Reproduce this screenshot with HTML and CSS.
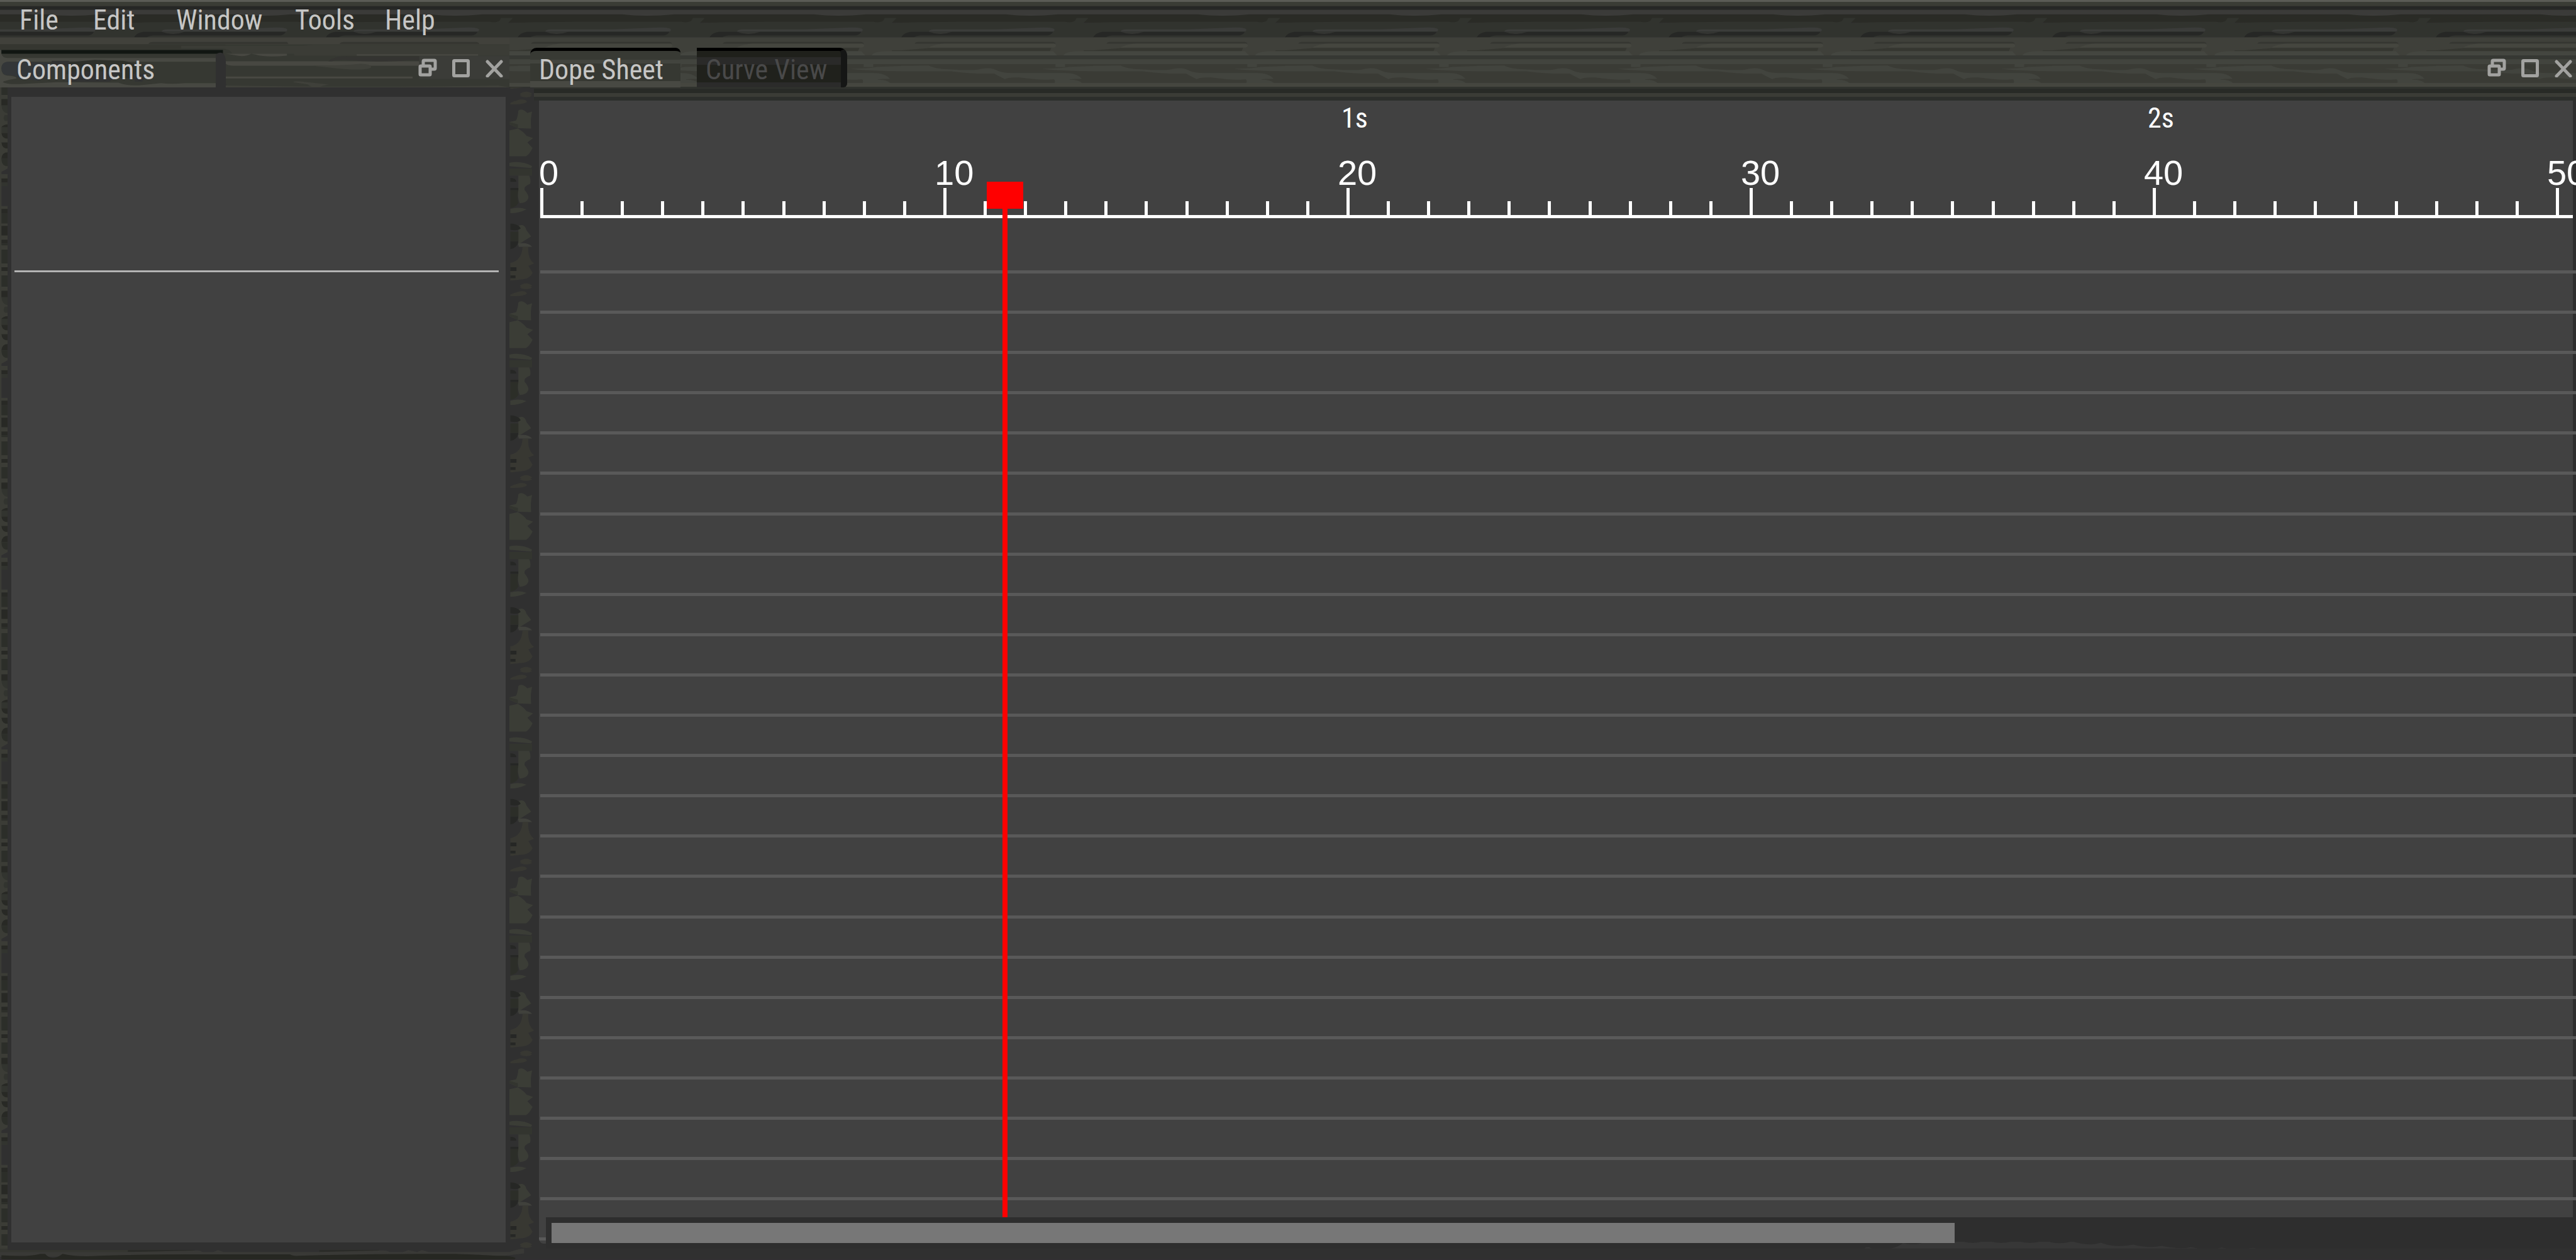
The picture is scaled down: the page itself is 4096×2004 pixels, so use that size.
FILE: index.html
```html
<!DOCTYPE html>
<html lang="en">
<head>
<meta charset="utf-8">
<title>Dope Sheet</title>
<link rel="stylesheet" href="styles.css">
</head>
<body>
<svg class="symbols" aria-hidden="true">
  <symbol id="restore" viewBox="0 0 30 30">
    <path d="M8 11V4.500Q8 3 9.500 3H25.500Q27 3 27 4.500V15.500Q27 17 25.500 17H20M3 13Q3 12 4 12H18Q19 12 19 13V25Q19 26 18 26H4Q3 26 3 25Z" fill="none" stroke="currentColor" stroke-width="5" stroke-linejoin="round"/>
  </symbol>
  <symbol id="maximize" viewBox="0 0 30 30">
    <rect x="3.500" y="3.500" width="23" height="24" rx="1" fill="none" stroke="currentColor" stroke-width="5"/>
  </symbol>
  <symbol id="close" viewBox="0 0 30 30">
    <path d="M4 5L26 28M26 5L4 28" fill="none" stroke="currentColor" stroke-width="5" stroke-linecap="round"/>
  </symbol>
</svg>

<nav class="menubar" aria-label="Main menu">
  <button type="button">File</button>
  <button type="button">Edit</button>
  <button type="button">Window</button>
  <button type="button">Tools</button>
  <button type="button">Help</button>
</nav>

<main class="workspace">
  <aside class="dock">
    <header class="dock-title">
      <h2>Components</h2>
      <div class="window-controls">
        <button type="button" aria-label="Restore"><svg><use href="#restore"/></svg></button>
        <button type="button" aria-label="Maximize"><svg><use href="#maximize"/></svg></button>
        <button type="button" aria-label="Close"><svg><use href="#close"/></svg></button>
      </div>
    </header>
    <div class="dock-body">
      <div class="dock-frame">
        <div class="component-list"><hr></div>
      </div>
    </div>
  </aside>

  <section class="editor">
    <header class="tab-row">
      <div class="tabs" role="tablist">
        <button type="button" class="tab active" role="tab" aria-selected="true">Dope Sheet</button>
        <button type="button" class="tab" role="tab" aria-selected="false">Curve View</button>
      </div>
      <div class="window-controls">
        <button type="button" aria-label="Restore"><svg><use href="#restore"/></svg></button>
        <button type="button" aria-label="Maximize"><svg><use href="#maximize"/></svg></button>
        <button type="button" aria-label="Close"><svg><use href="#close"/></svg></button>
      </div>
    </header>

    <div class="editor-body">
      <div class="sheet">
        <div class="ruler">
          <div class="scale seconds">
            <span style="grid-column:21">1s</span>
            <span style="grid-column:41">2s</span>
          </div>
          <div class="scale frames">
            <span class="origin" style="grid-column:1">0</span>
            <span style="grid-column:11">10</span>
            <span style="grid-column:21">20</span>
            <span style="grid-column:31">30</span>
            <span style="grid-column:41">40</span>
            <span style="grid-column:51">50</span>
          </div>
          <div class="scale ticks">
            <i></i><i></i><i></i><i></i><i></i><i></i><i></i><i></i><i></i><i></i>
            <i></i><i></i><i></i><i></i><i></i><i></i><i></i><i></i><i></i><i></i>
            <i></i><i></i><i></i><i></i><i></i><i></i><i></i><i></i><i></i><i></i>
            <i></i><i></i><i></i><i></i><i></i><i></i><i></i><i></i><i></i><i></i>
            <i></i><i></i><i></i><i></i><i></i><i></i><i></i><i></i><i></i><i></i>
            <i></i>
          </div>
        </div>
        <div class="rows">
          <div></div><div></div><div></div><div></div><div></div><div></div>
          <div></div><div></div><div></div><div></div><div></div><div></div>
          <div></div><div></div><div></div><div></div><div></div><div></div>
          <div></div><div></div><div></div><div></div><div></div><div class="last"></div>
        </div>
        <div class="playhead" style="left:22.88%"></div>
      </div>
      <div class="scroll-row">
        <div class="gutter"></div>
        <div class="scrollbar" role="scrollbar" aria-label="Timeline" aria-orientation="horizontal" aria-valuenow="0"><div class="thumb" style="width:69.300%"></div></div>
      </div>
    </div>
  </section>
</main>
<footer class="statusbar"></footer>
</body>
</html>
```
FILE: styles.css
```css
* { box-sizing: border-box; margin: 0; padding: 0; }

body {
  display: flex;
  flex-direction: column;
  height: 100vh;
  overflow: hidden;
  color: #c6c6c5;
  font: 44px/56px "Roboto Condensed", Roboto, "Liberation Sans", sans-serif;
  background-color: #303030;
  /* wood grain strip behind the menu bar and the tab row */
  background-image: url("data:image/svg+xml,%3Csvg xmlns='http://www.w3.org/2000/svg' viewBox='0 0 404 212' width='404' height='212' preserveAspectRatio='none'%3E%3Cpath fill='%235a5b55' d='M0 0H404V4H0z'/%3E%3Cpath fill='%233a3c35' d='M0 4H404V13H0z'/%3E%3Cpath fill='%23262725' d='M0 13H404V21H0z'/%3E%3Cpath fill='%232a2b26' d='M0 21H404V48H0z'/%3E%3Cpath fill='%233b3b39' d='M0 21H404V30H330Q270 36 220 30H0z'/%3E%3Cpath fill='%2331332e' d='M0 48Q60 46 130 46H345Q366 50 369 38H394Q388 44 383 49L404 48V79H0z'/%3E%3Cpath fill='%233b3c3a' d='M58 67Q60 62 70 62H200L300 58Q322 58 323 63Q322 67 318 67z'/%3E%3Cpath fill='%23262725' d='M0 79Q5 69 20 67H320Q316 75 305 75H40Q30 76 27 79z'/%3E%3Cpath fill='%23343532' d='M58 67Q82 76 107 67z'/%3E%3Cpath fill='%233f403a' d='M0 79H404V117H0z'/%3E%3Cpath fill='%23353631' d='M28 92Q30 88 36 88H320Q326 90 325 92z'/%3E%3Cpath fill='%2345463f' d='M58 100Q70 93 90 92H322Q330 96 322 100z'/%3E%3Cpath fill='%23353630' d='M0 106L60 101H316L313 108H0zM384 106H404V108H384z'/%3E%3Cpath fill='%23444640' d='M0 108H320L328 117H0zM342 117Q344 109 374 108H404V117z'/%3E%3Cpath fill='%23363833' d='M0 117H404V125H0z'/%3E%3Cpath fill='%233a3b35' d='M0 125H404V183H0z'/%3E%3Cpath fill='%2342443e' d='M0 125H404V135H0z'/%3E%3Cpath fill='%2342443e' d='M-51 141Q10 138 58 138Q70 145 100 146Q140 149 160 147Q187 139 205 150Q215 154 235 154H345Q370 154 380 166Q354 166 354 168Q378 168 384 179H322Q326 168 321 167Q300 170 247 163Q222 163 219 167Q205 160 196 155Q150 156 104 150Q50 150 6 150Q-60 150 -108 145z'/%3E%3Cpath fill='%2342443e' d='M353 141Q380 140 404 139V150Q350 150 296 145Q340 144 353 141zM325 133H345V141H325z'/%3E%3Cpath fill='%2345463f' d='M0 175H404V183H0z'/%3E%3Cpath fill='%2330322d' d='M0 183H404V187H0z'/%3E%3Cpath fill='%23282a26' d='M0 187H404V196H0z'/%3E%3Cpath fill='%233b3c36' d='M0 196H404V204H0z'/%3E%3Cpath fill='%232c2e2b' d='M0 204H404V212H0z'/%3E%3C/svg%3E");
  background-repeat: repeat-x;
  background-position: 213px 0;
  background-size: 305px 160px;
}

.symbols { display: none; }

button {
  border: 0;
  background: none;
  color: inherit;
  font: inherit;
  text-align: left;
  white-space: nowrap;
}

.menubar {
  display: grid;
  grid-template-columns: 117px 132px 189px 143px auto;
  height: 60px;
  padding: 3px 31px 0;
}

.workspace { display: flex; flex: 1; min-height: 0; }

/* components dock */
.dock { display: flex; flex: 0 0 810px; flex-direction: column; }

.dock-title {
  display: flex;
  justify-content: space-between;
  align-items: flex-end;
  height: 79px;
  padding: 0 9px 0 26px;
  background: #363832 url("data:image/svg+xml,%3Csvg xmlns='http://www.w3.org/2000/svg' viewBox='0 79 1074 105' width='1074' height='105' preserveAspectRatio='none'%3E%3Cpath fill='%2341413b' d='M0 79H1074V93H0z'/%3E%3Cpath fill='%23343530' d='M313 92Q315 88 322 88H605L608 92zM716 92Q718 88 725 88H1005Q1011 90 1010 92z'/%3E%3Cpath fill='%23353630' d='M0 93H475V105H0z'/%3E%3Cpath fill='%233b3c36' d='M382 96H640L660 94H1074V117H620V113H490Q485 103 470 102H382z'/%3E%3Cpath fill='%23474842' d='M0 105H3V113Q5 122 16 122H455V130H180Q130 128 100 130H20Q3 132 3 143Q3 158 15 159Q35 160 35 165Q6 170 6 173Q15 178 40 177L120 173L250 174Q270 182 300 179L340 175Q360 178 390 175H455V184H0z'/%3E%3Cpath fill='%23333638' d='M3 143Q4 131 15 130L95 131Q108 132 108 135L110 160L80 170L40 165Q35 158 15 158Q3 157 3 143z'/%3E%3Cpath fill='%232d302a' d='M145 131L200 126L260 128Q290 133 290 145L280 165L200 160L140 155z'/%3E%3Cpath fill='%23313232' d='M109 128H146V140H109zM150 150H260L230 172H140zM280 155H310L300 172H285z'/%3E%3Cpath fill='%23111612' d='M3 105H470V113H3z'/%3E%3Cpath fill='%23303030' d='M455 115Q462 108 470 112Q476 118 476 130V175L478 184H455z'/%3E%3Cpath fill='%23484842' d='M476 113H605V117Q560 121 540 115L530 113Q515 121 495 116zM476 129H884V138H490Q476 137 476 133zM476 161H870V165H476zM752 114H1008V117H752z'/%3E%3Cpath fill='%23343431' d='M692 129Q705 118 730 118H960V126Q900 130 870 126Q800 133 730 126Q705 125 700 129z'/%3E%3Cpath fill='%233f403a' d='M660 138Q720 138 760 134Q785 135 782 142Q775 147 740 146Q700 144 660 138zM618 173Q620 170 640 172L694 178Q680 180 670 184Q650 182 650 178zM476 180Q800 185 1050 180L1074 184H476z'/%3E%3Cpath fill='%233b3c38' d='M884 118H1074V166H884z'/%3E%3C/svg%3E") 0 0 / 100% 100% no-repeat;
}

.dock-title h2 { font: inherit; }

.window-controls {
  display: flex;
  gap: 23px;
  padding-bottom: 16px;
  color: #a2a2a0;
}

.window-controls button { width: 30px; height: 30px; }
.window-controls svg { display: block; width: 30px; height: 30px; }

.dock-body {
  display: flex;
  flex: 1;
  padding-left: 12px;
  background: #303030 url("data:image/svg+xml,%3Csvg xmlns='http://www.w3.org/2000/svg' viewBox='0 0 16 404' width='16' height='404' preserveAspectRatio='none'%3E%3Cpath fill='%233b3c36' d='M0 0H16V404H0z'/%3E%3Cpath fill='%2332342f' d='M3 8H16V39Q3 37 3 20zM16 42V55H10Q5 49 10 42zM3 67H16V80H3zM3 184H16V192H3z'/%3E%3Cpath fill='%23282925' d='M3 9H16V22H3zM3 68Q6 63 16 62V68zM3 80H16V92Q4 92 3 80zM3 100H16V113Q4 113 3 100zM3 134Q4 121 16 121V134zM3 176H16V184H3zM3 240H16V250H3zM3 276H16V296H3zM3 305H16V313H3zM3 363H16V371H3z'/%3E%3Cpath fill='%232c2e29' d='M3 134H16V150Q3 150 3 134zM3 250H16V271H3zM3 313H16V317H3zM3 326H16V355H3zM3 380H16V404H3z'/%3E%3Cpath fill='%23303030' d='M3 192H16V234H3zM3 162L16 155V167H3z'/%3E%3C/svg%3E") 0 12px / 12px 305px repeat-y;
}

.dock-frame {
  display: flex;
  flex: 1;
  padding: 15px 6px 10px;
  background: #303030;
}

.component-list { flex: 1; padding: 276px 11px 0 5px; background: #414141; }
.component-list hr { height: 3px; border: 0; background: #b4b4b4; }

/* timeline editor */
.editor { display: flex; flex: 1; flex-direction: column; min-width: 0; }

.tab-row {
  display: flex;
  justify-content: space-between;
  align-items: flex-end;
  height: 79px;
  padding: 0 5px 0 33px;
}

.tabs { display: flex; gap: 26px; }

.tab {
  width: 239px;
  padding: 2px 0 0 14px;
  border-top: 5px solid #000;
  border-right: 10px solid #151615;
  border-radius: 0 12px 6px 0;
  background: linear-gradient(#1f201b 10px, #2a2a29 10px 22px, #20211c 22px 50px, #2b2b2a 50px);
  color: #494949;
}

.tab.active {
  border-right: 0;
  border-radius: 10px 8px 0 0;
  background: linear-gradient(#383a34 14px, #42443e 14px 20px, #363832 20px 48px, #484943 48px);
  color: #c6c6c5;
}

.editor-body {
  display: flex;
  flex: 1;
  flex-direction: column;
  min-height: 0;
  padding: 21px 0 0 47px;
  /* knotted grain on the splitter */
  background: url("data:image/svg+xml,%3Csvg xmlns='http://www.w3.org/2000/svg' viewBox='0 0 52 404' width='52' height='404' preserveAspectRatio='none'%3E%3Cpath fill='%23303030' d='M0 0H52V404H0z'/%3E%3Cpath fill='%233b3d36' d='M0 57L14 54Q18 46 19 33Q26 27 38 38L48 35Q44 50 46 71L18 70L0 62zM0 75L18 71Q30 78 36 86L50 91L38 100L49 112Q42 126 35 129L0 129zM0 143Q25 138 48 150L46 154L0 150zM19 170H42Q46 180 44 187Q30 192 32 200Q42 212 40 218Q36 228 22 228Q16 216 19 195zM2 240Q20 235 36 241Q20 249 2 249zM19 276Q32 270 36 285L46 298L30 308L19 315z'/%3E%3Cpath fill='%2333352f' d='M0 155H48V170H0zM0 57L18 62V70L0 62z'/%3E%3Cpath fill='%2340413c' d='M18 313Q40 310 48 320H20z'/%3E%3Cpath fill='%23383832' d='M28 320H40Q38 345 52 355L40 360L49 375Q44 386 30 388L2 391V354Q26 350 28 320zM22 2Q36 -6 48 2Q36 8 22 2zM22 402Q36 392 48 402Q46 404 36 404H24zM2 17Q30 4 37 14Q34 20 2 20z'/%3E%3Cpath fill='%23262725' d='M2 175Q14 175 15 183H2zM2 196H19V201H2zM2 271Q18 271 24 281Q18 287 2 284zM2 308H19Q18 322 2 325zM2 363H15V371H2zM2 380H13V386H2z'/%3E%3Cpath fill='%232c2e28' d='M2 201H19Q16 215 19 228Q12 238 2 238zM2 288H19V308H2z'/%3E%3C/svg%3E") 0 12px / 39px 305px repeat-y;
}

.sheet {
  position: relative;
  display: flex;
  flex: 1;
  flex-direction: column;
  min-height: 0;
  padding-left: 2px;
  background: linear-gradient(to left, #2e2e2e 5px, #414141 5px);
}

.ruler { padding-bottom: 83px; color: #fff; }

/* fifty whole frames and the start of the next one */
.scale { display: grid; grid-template-columns: repeat(50, minmax(0, 2fr)) minmax(0, 1fr); }
.scale span { margin-left: -14px; white-space: nowrap; }
.scale .origin { margin-left: -2px; }

.seconds span { margin-left: -8px; }

.frames {
  padding-top: 35px;
  font: 56px/48px "Liberation Sans", Arial, sans-serif;
}

.ticks {
  align-items: end;
  height: 48px;
  background: linear-gradient(#fff, #fff) 0 100% / calc(100% - 5px) 5px no-repeat;
}

.ticks i { height: 27px; border-left: 5px solid #fff; }
.ticks i:nth-child(10n + 1) { height: 48px; }

.rows { display: flex; flex: 1; flex-direction: column; }
.rows div { flex: 1; border-top: 5px solid #595959; }
.rows .last { flex: 0 0 32px; }

.playhead {
  position: absolute;
  top: 129px;
  bottom: 0;
  width: 58px;
  margin-left: -29px;
  background:
    linear-gradient(#f00, #f00) 0 0 / 58px 43px no-repeat,
    linear-gradient(#f00, #f00) 50% 0 / 8px 100% no-repeat;
}

.scroll-row { display: flex; height: 50px; }

.gutter {
  width: 11px;
  height: 42px;
  border-radius: 0 0 0 8px;
  background: linear-gradient(to bottom, #414141 32px, #595959 32px 37px, #414141 37px);
}

.scrollbar {
  flex: 1;
  padding: 9px 0 9px 9px;
  background: #2e2e2e url("data:image/svg+xml,%3Csvg xmlns='http://www.w3.org/2000/svg' viewBox='0 0 840 14' width='633' height='11'%3E%3Cpath fill='%23373737' d='M0 14Q8 4 16 14zM56 14Q72 9 82 -4Q100 4 120 -3L143 -12Q160 0 180 -8Q198 -17 204 -11Q230 3 258 -13Q290 4 320 -13Q350 4 380 -13Q410 4 440 -10Q470 8 500 -5Q530 13 568 1Q600 14 628 5Q670 18 690 9L705 14zM745 14Q755 7 765 14zM810 14Q820 9 828 14z' transform='translate(0 5) scale(1 .650)'/%3E%3C/svg%3E") 2096px 100% no-repeat;
}

.thumb { height: 32px; background: #777; }

.statusbar {
  height: 18px;
  border-bottom: 1px solid #342f33;
  background: #303030 url("data:image/svg+xml,%3Csvg xmlns='http://www.w3.org/2000/svg' viewBox='0 0 1120 24' width='844' height='18' preserveAspectRatio='none'%3E%3Cpath fill='%23353631' d='M0 0H16V3H270V7H0z'/%3E%3Cpath fill='%232a2b27' d='M270 3H410V7H270zM674 3H800V7H674z'/%3E%3Cpath fill='%23393936' d='M0 7H270L410 4Q420 3 428 7H450L460 3L472 7H674L800 4Q815 3 822 7L850 7L862 3L880 7L890 3L905 7H1075Q1095 0 1106 0V10L1050 17H0z'/%3E%3Cpath fill='%23262722' d='M3 24V14Q60 18 85 11H95Q110 28 132 11Q160 18 210 15Q300 12 400 12H612Q618 16 630 15Q800 10 960 11Q1020 13 1048 15Q1080 14 1088 20L1084 24z'/%3E%3C/svg%3E") 0 0 / 844px 18px no-repeat;
}
```
